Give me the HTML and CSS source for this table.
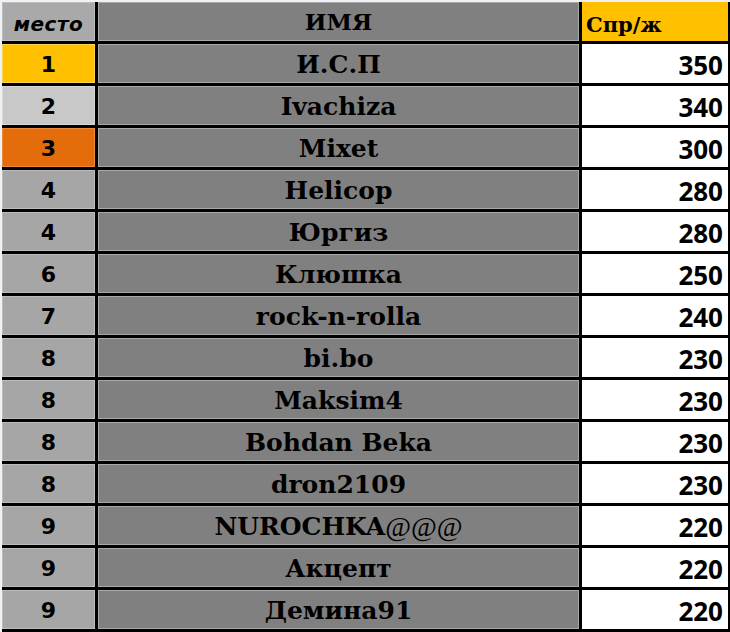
FILE: index.html
```html
<!DOCTYPE html>
<html lang="ru">
<head>
<meta charset="utf-8">
<title>Рейтинг</title>
<link rel="stylesheet" href="styles.css">
</head>
<body>
<div class="sheet">
  <div class="place head"><span class="mesto">место</span></div>
  <div class="name head-name">ИМЯ</div>
  <div class="score-head">Спр/ж</div>

  <div class="place gold">1</div><div class="name">И.С.П</div><div class="score">350</div>
  <div class="place silver">2</div><div class="name">Ivachiza</div><div class="score">340</div>
  <div class="place bronze">3</div><div class="name">Mixet</div><div class="score">300</div>
  <div class="place">4</div><div class="name">Helicop</div><div class="score">280</div>
  <div class="place">4</div><div class="name">Юргиз</div><div class="score">280</div>
  <div class="place">6</div><div class="name">Клюшка</div><div class="score">250</div>
  <div class="place">7</div><div class="name">rock-n-rolla</div><div class="score">240</div>
  <div class="place">8</div><div class="name">bi.bo</div><div class="score">230</div>
  <div class="place">8</div><div class="name">Maksim4</div><div class="score">230</div>
  <div class="place">8</div><div class="name">Bohdan Beka</div><div class="score">230</div>
  <div class="place">8</div><div class="name">dron2109</div><div class="score">230</div>
  <div class="place">9</div><div class="name">NUROCHKA<span class="at">@@@</span></div><div class="score">220</div>
  <div class="place">9</div><div class="name">Акцепт</div><div class="score">220</div>
  <div class="place">9</div><div class="name">Демина91</div><div class="score">220</div>
</div>
</body>
</html>
```
FILE: styles.css
```css
html, body {
  margin: 0;
  padding: 0;
  background: #eef1f6;
}
.sheet {
  margin: 2px 0 0 2px;
  width: 728px;
  height: 630px;
  box-sizing: border-box;
  padding: 0 3px 3px 0;
  background: #000;
  display: grid;
  grid-template-columns: 93px 481px 146px;
  grid-template-rows: repeat(15, 39px);
  column-gap: 3px;
  row-gap: 3px;
}
.place {
  background: #a6a6a6;
  border: 1px solid #bdbdbd;
  box-sizing: border-box;
  display: flex;
  align-items: center;
  justify-content: center;
  font-family: "DejaVu Sans", sans-serif;
  font-weight: bold;
  font-size: 22px;
  color: #000;
  padding-top: 2px;
}
.place.head {
  background: #a9a9a9;
  padding-top: 4px;
}
.mesto {
  font-family: "DejaVu Sans", sans-serif;
  font-style: italic;
  font-weight: bold;
  font-size: 20px;
  letter-spacing: 0.5px;
}
.place.gold { background: #ffc000; border-color: #ffd24d; }
.place.silver { background: #c8c8c8; border-color: #d8d8d8; }
.place.bronze { background: #e46c0a; border-color: #ea8a3a; }
.name {
  background: #808080;
  border: 1px solid #a8a8a8;
  box-sizing: border-box;
  display: flex;
  align-items: center;
  justify-content: center;
  font-family: "DejaVu Serif", serif;
  font-weight: bold;
  font-size: 25px;
  color: #000;
  padding-top: 2px;
}
.head-name {
  font-size: 23px;
  padding-top: 0;
}
.at {
  font-family: "Liberation Serif", serif;
  font-weight: normal;
  font-size: 28px;
}
.score-head {
  background: #ffc000;
  display: flex;
  align-items: flex-end;
  padding: 0 0 4px 4px;
  box-sizing: border-box;
  font-family: "DejaVu Serif", serif;
  font-weight: bold;
  font-size: 21px;
  color: #000;
}
.score {
  background: #fff;
  display: flex;
  align-items: center;
  justify-content: flex-end;
  padding: 3px 5px 0 0;
  box-sizing: border-box;
  font-family: "Open Sans", sans-serif;
  font-weight: bold;
  font-size: 26px;
  color: #000;
}
```
